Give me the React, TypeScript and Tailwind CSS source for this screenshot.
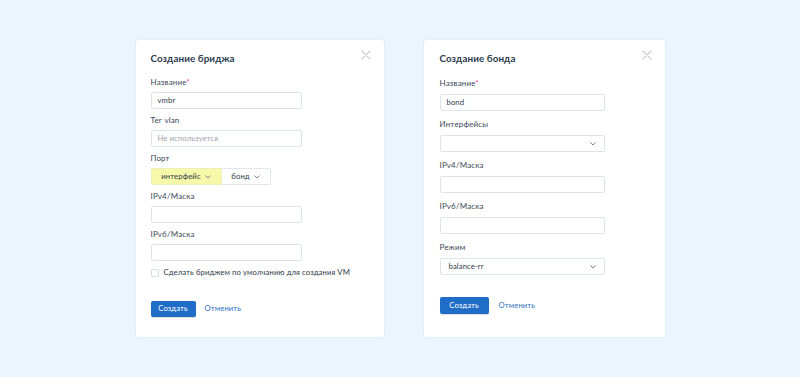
import React from 'react';

const Close = () => (
  <svg width="10" height="10" viewBox="0 0 10 10" className="block">
    <path d="M1 1L9 9M9 1L1 9" stroke="#c9cfd6" strokeWidth="1.2" strokeLinecap="round" />
  </svg>
);

const Chevron = () => (
  <svg width="6" height="4" viewBox="0 0 6 4" className="block">
    <path d="M0.8 0.8L3 3L5.2 0.8" stroke="#6b7785" strokeWidth="0.9" fill="none" strokeLinecap="round" />
  </svg>
);

const Label = ({ text, required }: { text: string; required?: boolean }) => (
  <div className="h-[12px] leading-[12px] text-[8px] text-[#3d4958] whitespace-nowrap tracking-[0.15px]">
    {text}
    {required && <span className="text-[#ff3aa2]">*</span>}
  </div>
);

const Input = ({ value, placeholder, width }: { value?: string; placeholder?: string; width: string }) => (
  <div className={`${width} h-[17px] border border-[#dfe4ea] rounded-[2px] bg-white flex items-center px-[6px] text-[7.7px] tracking-[0.1px]`}>
    {value ? <span className="text-[#2f3b4a]">{value}</span> : <span className="text-[#9ba4ae]">{placeholder}</span>}
  </div>
);

const Select = ({ value }: { value?: string }) => (
  <div className="w-[165px] h-[17px] border border-[#dfe4ea] rounded-[2px] bg-white flex items-center justify-between pl-[8px] pr-[8px] text-[7.7px] text-[#2f3b4a] tracking-[0.1px]">
    <span>{value}</span>
    <Chevron />
  </div>
);

export default function App() {
  return (
    <div className="w-[800px] h-[377px] bg-[#eaf5fe] flex items-center justify-center gap-[40px] font-['Lato','Noto_Sans',sans-serif]">
      {/* bridge */}
      <div className="relative w-[248px] h-[297px] bg-white rounded-[3px] pt-[10px] px-[15px] shadow-[0_0_2px_rgba(150,180,210,0.25)]">
        <div className="absolute top-[10px] right-[13px]"><Close /></div>
        <div className="h-[16px] leading-[16px] text-[9.8px] font-bold text-[#2b3a4d] tracking-[0.1px]">Создание бриджа</div>
        <div className="mt-[10px] flex flex-col gap-[5px]">
          <div className="flex flex-col gap-[4px]">
            <Label text="Название" required />
            <Input width="w-[151px]" value="vmbr" />
          </div>
          <div className="flex flex-col gap-[4px]">
            <Label text="Тег vlan" />
            <Input width="w-[151px]" placeholder="Не используется" />
          </div>
          <div className="flex flex-col gap-[4px]">
            <Label text="Порт" />
            <div className="flex h-[17px] text-[7.7px] text-[#2f3b4a] tracking-[0.1px]">
              <div className="w-[71px] bg-[#f6f9a9] border border-[#eef0b8] rounded-l-[2px] flex items-center justify-center gap-[4px]">
                интерфейс <Chevron />
              </div>
              <div className="w-[49px] bg-white border border-l-0 border-[#e3e7ec] rounded-r-[2px] flex items-center justify-center gap-[4px]">
                бонд <Chevron />
              </div>
            </div>
          </div>
          <div className="flex flex-col gap-[4px]">
            <Label text="IPv4/Маска" />
            <Input width="w-[151px]" />
          </div>
          <div className="flex flex-col gap-[4px]">
            <Label text="IPv6/Маска" />
            <Input width="w-[151px]" />
          </div>
        </div>
        <div className="mt-[6px] h-[12px] flex items-center gap-[5px]">
          <div className="w-[8px] h-[8px] border border-[#d9dee4] rounded-[1px] bg-white" />
          <span className="text-[7.7px] text-[#2f3b4a] whitespace-nowrap tracking-[0.1px]">Сделать бриджем по умолчанию для создания VM</span>
        </div>
        <div className="mt-[22px] flex items-center gap-[9px]">
          <button className="h-[16px] w-[45px] rounded-[2px] bg-[#1f6dc6] text-white text-[7.7px] leading-none tracking-[0.1px] shadow-[0_1px_1px_rgba(0,0,0,0.15)]">Создать</button>
          <span className="text-[7.7px] text-[#2c6fc3] tracking-[0.1px]">Отменить</span>
        </div>
      </div>

      {/* bond */}
      <div className="relative w-[241px] h-[297px] bg-white rounded-[3px] pt-[10px] px-[16px] shadow-[0_0_2px_rgba(150,180,210,0.25)]">
        <div className="absolute top-[10px] right-[13px]"><Close /></div>
        <div className="h-[16px] leading-[16px] text-[9.8px] font-bold text-[#2b3a4d] tracking-[0.1px]">Создание бонда</div>
        <div className="mt-[11px] flex flex-col gap-[7px]">
          <div className="flex flex-col gap-[5px]">
            <Label text="Название" required />
            <Input width="w-[165px]" value="bond" />
          </div>
          <div className="flex flex-col gap-[5px]">
            <Label text="Интерфейсы" />
            <Select />
          </div>
          <div className="flex flex-col gap-[5px]">
            <Label text="IPv4/Маска" />
            <Input width="w-[165px]" />
          </div>
          <div className="flex flex-col gap-[5px]">
            <Label text="IPv6/Маска" />
            <Input width="w-[165px]" />
          </div>
          <div className="flex flex-col gap-[5px]">
            <Label text="Режим" />
            <Select value="balance-rr" />
          </div>
        </div>
        <div className="mt-[22px] flex items-center gap-[10px]">
          <button className="h-[17px] w-[49px] rounded-[2px] bg-[#1f6dc6] text-white text-[7.7px] leading-none tracking-[0.1px] shadow-[0_1px_1px_rgba(0,0,0,0.15)]">Создать</button>
          <span className="text-[7.7px] text-[#2c6fc3] tracking-[0.1px]">Отменить</span>
        </div>
      </div>
    </div>
  );
}
